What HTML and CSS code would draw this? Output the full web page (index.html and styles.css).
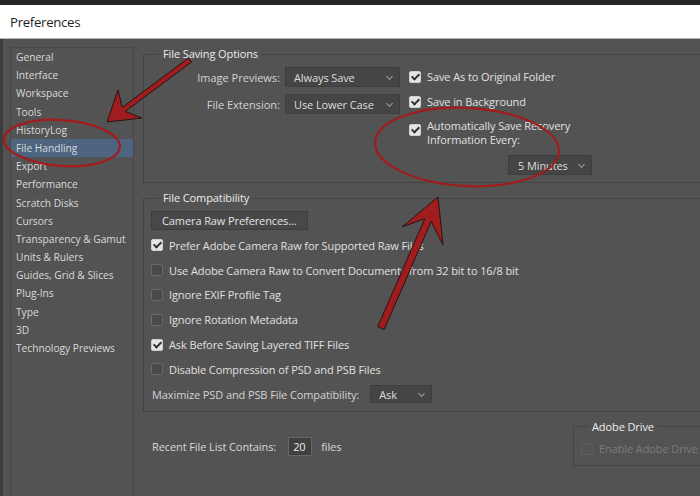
FILE: index.html
```html
<!DOCTYPE html>
<html lang="en">
<head>
<meta charset="utf-8">
<title>Preferences</title>
<link rel="stylesheet" href="styles.css">
</head>
<body>
<div class="topstrip"></div>
<header class="titlebar"><span class="title">Preferences</span></header>
<div class="window">
  <nav class="sidebar">
    <div class="nav-item">General</div>
    <div class="nav-item">Interface</div>
    <div class="nav-item">Workspace</div>
    <div class="nav-item">Tools</div>
    <div class="nav-item">HistoryLog</div>
    <div class="nav-item active">File Handling</div>
    <div class="nav-item">Export</div>
    <div class="nav-item">Performance</div>
    <div class="nav-item">Scratch Disks</div>
    <div class="nav-item">Cursors</div>
    <div class="nav-item">Transparency &amp; Gamut</div>
    <div class="nav-item">Units &amp; Rulers</div>
    <div class="nav-item">Guides, Grid &amp; Slices</div>
    <div class="nav-item">Plug-Ins</div>
    <div class="nav-item">Type</div>
    <div class="nav-item">3D</div>
    <div class="nav-item">Technology Previews</div>
  </nav>
  <main class="content">
    <fieldset class="group saving">
      <legend>File Saving Options</legend>
      <div class="saving-body">
        <div class="field-grid">
          <span class="field-label">Image Previews:</span>
          <div class="select">Always Save</div>
          <span class="field-label">File Extension:</span>
          <div class="select">Use Lower Case</div>
        </div>
        <div class="check-col">
          <div class="check-row"><span class="cb on"></span><span>Save As to Original Folder</span></div>
          <div class="check-row"><span class="cb on"></span><span>Save in Background</span></div>
          <div class="check-row multi"><span class="cb on"></span><span class="two-line"><span class="line">Automatically Save Recovery</span><span class="line">Information Every:</span></span></div>
          <div class="select minutes">5 Minutes</div>
        </div>
      </div>
    </fieldset>

    <fieldset class="group compat">
      <legend>File Compatibility</legend>
      <div class="compat-body">
        <div class="button">Camera Raw Preferences...</div>
        <div class="check-row list"><span class="cb on"></span><span>Prefer Adobe Camera Raw for Supported Raw Files</span></div>
        <div class="check-row list"><span class="cb"></span><span>Use Adobe Camera Raw to Convert Documents from 32 bit to 16/8 bit</span></div>
        <div class="check-row list"><span class="cb"></span><span>Ignore EXIF Profile Tag</span></div>
        <div class="check-row list"><span class="cb"></span><span>Ignore Rotation Metadata</span></div>
        <div class="check-row list"><span class="cb on"></span><span>Ask Before Saving Layered TIFF Files</span></div>
        <div class="check-row list"><span class="cb"></span><span>Disable Compression of PSD and PSB Files</span></div>
        <div class="max-row"><span>Maximize PSD and PSB File Compatibility:</span><div class="select ask">Ask</div></div>
      </div>
    </fieldset>

    <div class="bottom-row">
      <div class="recent">
        <span>Recent File List Contains:</span>
        <span class="numbox">20</span>
        <span class="unit">files</span>
      </div>
      <fieldset class="group drive">
        <legend>Adobe Drive</legend>
        <div class="check-row disabled"><span class="cb off"></span><span>Enable Adobe Drive</span></div>
      </fieldset>
    </div>
  </main>
</div>

<svg class="annot" width="700" height="496" viewBox="0 0 700 496" aria-hidden="true">
  <ellipse cx="62" cy="143" rx="58" ry="23" transform="rotate(4 62 143)" fill="none" stroke="#a31b1b" stroke-width="2.2"/>
  <ellipse cx="467" cy="147" rx="92" ry="39" transform="rotate(3 467 147)" fill="none" stroke="#a31b1b" stroke-width="2.2"/>
  <polygon points="188.5,58 122.3,107.4 118,90 107,122 142,118 125.3,111.4 191.5,62" fill="#a11c1c" stroke="#241414" stroke-width="1" stroke-linejoin="round"/>
  <polygon points="377.8,326.6 424.8,218.6 402,227 438,197 443,245 431.2,221.4 384.2,329.4" fill="#a11c1c" stroke="#241414" stroke-width="1" stroke-linejoin="round"/>
</svg>
</body>
</html>
```

FILE: styles.css
```css
* { box-sizing: border-box; }

html, body { margin: 0; padding: 0; }

body {
  width: 700px;
  height: 496px;
  overflow: hidden;
  position: relative;
  background: #535353;
  font-family: "Open Sans", "Noto Sans", sans-serif;
  font-size: 11px;
  color: #dcdcdc;
}

.topstrip { height: 5px; background: #272727; }

.titlebar {
  height: 34px;
  background: #ffffff;
  border-bottom: 1px solid #b4b4b4;
  padding-left: 10px;
  display: flex;
  align-items: center;
}

.title {
  font-size: 13.2px;
  letter-spacing: -0.3px;
  color: #1d1d1d;
}

.window {
  display: flex;
  height: 457px;
  border-left: 3px solid #3c3c3c;
  padding-top: 8px;
}

.sidebar {
  flex: 0 0 124px;
  margin-left: 7px;
  border: 1px solid #474747;
  border-bottom: none;
}

.nav-item {
  height: 18.2px;
  line-height: 18.2px;
  padding-left: 5px;
  font-size: 10.2px;
  white-space: nowrap;
  color: #dadada;
}

.nav-item.active { background: #4d6581; }

.content {
  flex: 0 0 620px;
  margin-left: 9px;
  letter-spacing: -0.1px;
}

.group {
  margin: 0;
  padding: 0;
  min-width: 0;
  border: 1px solid #444444;
}

.group legend {
  margin-left: 15px;
  padding: 0 4px;
  font-size: 11px;
  line-height: 14px;
  color: #ececec;
}

/* File saving options */
.saving { padding-bottom: 7px; }

.saving-body { display: flex; }

.field-grid {
  display: grid;
  grid-template-columns: 136px 115px;
  grid-auto-rows: 20px;
  column-gap: 5px;
  row-gap: 7px;
  margin-top: 6px;
}

.field-label {
  align-self: center;
  text-align: right;
  color: #d4d4d4;
  white-space: nowrap;
  letter-spacing: 0;
}

.select {
  display: flex;
  align-items: center;
  justify-content: space-between;
  height: 20px;
  padding: 0 7px 0 8px;
  background: #454545;
  border: 1px solid #3d3d3d;
  border-radius: 1px;
  color: #dedede;
  white-space: nowrap;
}

.select::after {
  content: "";
  width: 4px;
  height: 4px;
  margin-top: -2px;
  border-right: 1px solid #9c9c9c;
  border-bottom: 1px solid #9c9c9c;
  transform: rotate(45deg);
}

.check-col {
  margin-left: 9px;
  margin-top: 3px;
  display: flex;
  flex-direction: column;
}

.check-row {
  display: flex;
  align-items: center;
  gap: 6px;
  height: 25px;
  white-space: nowrap;
  color: #e0e0e0;
}

.check-row.multi {
  height: auto;
  align-items: flex-start;
  padding-top: 5px;
}

.two-line {
  display: flex;
  flex-direction: column;
}

.two-line .line {
  display: block;
  height: 14px;
  line-height: 14px;
}

.check-row.multi .cb { margin-top: 5px; }

.select.minutes {
  width: 84px;
  margin-left: 99px;
  margin-top: 8px;
  padding-left: 9px;
}

.cb {
  flex: 0 0 12px;
  width: 12px;
  height: 12px;
  border-radius: 2px;
  background: #4a4a4a;
  border: 1px solid #6a6a6a;
  display: flex;
  align-items: center;
  justify-content: center;
}

.cb.on {
  background: #e4e4e4;
  border-color: #cfcfcf;
}

.cb.on::after {
  content: "";
  width: 3px;
  height: 6px;
  margin-top: -2px;
  border-right: 2px solid #2e2e2e;
  border-bottom: 2px solid #2e2e2e;
  transform: rotate(45deg);
}

.cb.off {
  background: #545454;
  border-color: #5e5e5e;
}

/* File compatibility */
.compat { margin-top: 8px; padding-bottom: 4px; }

.compat-body { padding-left: 7px; }

.button {
  display: flex;
  align-items: center;
  height: 19px;
  width: 157px;
  margin: 6px 0 3px;
  padding-left: 10px;
  background: #484848;
  border: 1px solid #3e3e3e;
  color: #e2e2e2;
  white-space: nowrap;
}

.check-row.list { height: 24.8px; }

.max-row {
  display: flex;
  align-items: center;
  gap: 11px;
  height: 25px;
  padding-left: 1px;
  color: #d4d4d4;
  white-space: nowrap;
}

.select.ask {
  width: 62px;
  height: 18px;
}

/* Bottom */
.bottom-row {
  display: flex;
  align-items: flex-start;
  margin-top: 8px;
}

.recent {
  display: flex;
  align-items: center;
  gap: 12px;
  height: 19px;
  margin-top: 17px;
  margin-left: 9px;
  color: #d8d8d8;
  white-space: nowrap;
}

.recent .unit { margin-left: -3px; }

.numbox {
  display: flex;
  align-items: center;
  width: 24px;
  height: 19px;
  padding-left: 4px;
  background: #404040;
  border: 1px solid #666666;
  color: #ececec;
}

.drive {
  margin-left: auto;
  width: 190px;
  padding: 3px 0 4px 7px;
}

.drive legend { margin-left: 7px; }

.check-row.disabled {
  height: 24px;
  color: #7b7b7b;
}

.annot {
  position: absolute;
  left: 0;
  top: 0;
  pointer-events: none;
}
```
